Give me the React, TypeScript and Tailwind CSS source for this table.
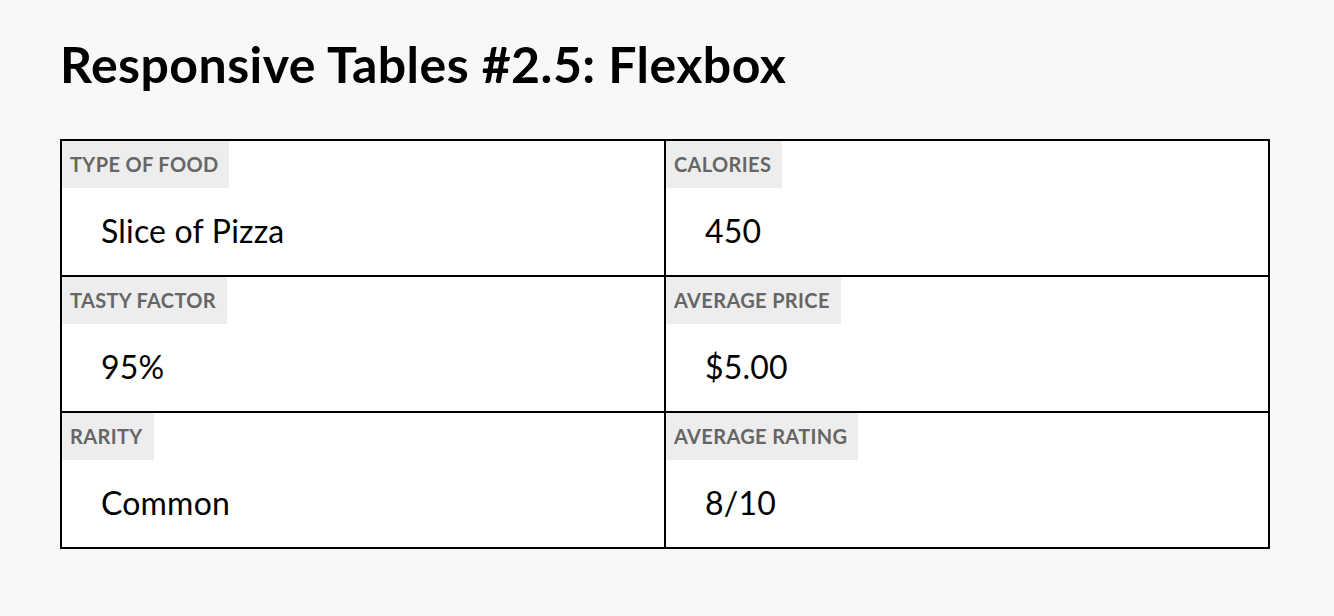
import React from 'react';

const cells = [
  { label: 'Type of Food', value: 'Slice of Pizza' },
  { label: 'Calories', value: '450' },
  { label: 'Tasty Factor', value: '95%' },
  { label: 'Average Price', value: '$5.00' },
  { label: 'Rarity', value: 'Common' },
  { label: 'Average Rating', value: '8/10' },
];

export default function App() {
  return (
    <div className="min-h-screen bg-[#f8f8f8] px-[60px] pt-[34px] text-black" style={{ fontFamily: 'Lato, "Open Sans", sans-serif' }}>
      <h1 className="text-[50px] font-bold leading-[60px] tracking-[0.45px]">Responsive Tables #2.5: Flexbox</h1>

      {/* Table */}
      <div className="mt-[45px] flex w-[1210px] flex-wrap border-l-2 border-t-2 border-black bg-white">
        {cells.map((c) => (
          <div key={c.label} className="flex h-[136px] w-1/2 flex-col items-start border-b-2 border-r-2 border-black">
            <div className="bg-[#ededed] pl-[8px] pr-[11px] py-[12px] text-[20px] font-bold uppercase leading-[23px] tracking-[0.35px] text-[#666]">
              {c.label}
            </div>
            <div className="flex flex-1 items-center pl-[39px] pb-[2px] text-[32px] tracking-[0.2px] leading-none">{c.value}</div>
          </div>
        ))}
      </div>
    </div>
  );
}
